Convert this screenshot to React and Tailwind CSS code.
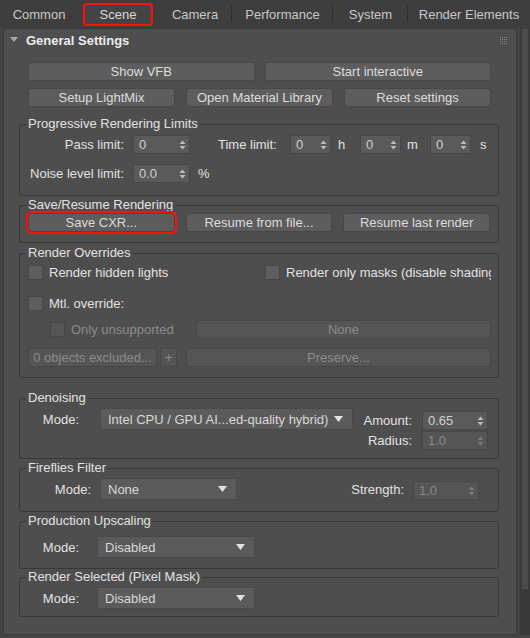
import React from 'react'

const FONT = "font-['Liberation_Sans',Arial,sans-serif]"

function Btn({ children, className = '', disabled = false }) {
  return (
    <div
      className={`h-[19px] flex items-center justify-center rounded-[3px] border border-[#474747] text-[13px] leading-none whitespace-nowrap ${disabled ? 'bg-[#555555] text-[#8c8c8c]' : 'bg-[#5d5d5d] text-[#dcdcdc]'} ${className}`}
    >
      {children}
    </div>
  )
}

function Arrows({ disabled }) {
  const c = disabled ? '#7a7a7a' : '#bdbdbd'
  return (
    <svg width="7" height="12" viewBox="0 0 7 12">
      <polygon points="0.5,5 3.5,1.5 6.5,5" fill={c} />
      <polygon points="0.5,7 3.5,10.5 6.5,7" fill={c} />
    </svg>
  )
}

function Spinner({ value, className = '', disabled = false }) {
  return (
    <div
      className={`h-[19px] flex items-center justify-between pl-[5px] pr-[3px] border border-[#474747] text-[13px] leading-none ${disabled ? 'bg-[#555555] text-[#8a8a8a]' : 'bg-[#5a5a5a] text-[#d0d0d0]'} ${className}`}
    >
      <span>{value}</span>
      <Arrows disabled={disabled} />
    </div>
  )
}

function Dropdown({ value, className = '' }) {
  return (
    <div className={`h-[22px] flex items-center justify-between pl-[7px] pr-[9px] bg-[#5b5b5b] border border-[#4a4a4a] text-[13px] leading-none text-[#d8d8d8] whitespace-nowrap ${className}`}>
      <span>{value}</span>
      <svg width="9" height="6" viewBox="0 0 9 6">
        <polygon points="0,0 9,0 4.5,6" fill="#e2e2e2" />
      </svg>
    </div>
  )
}

function Check({ label, disabled = false, className = '' }) {
  return (
    <div className={`flex items-center gap-[6px] text-[13px] leading-none whitespace-nowrap ${disabled ? 'text-[#8c8c8c]' : 'text-[#e2e2e2]'} ${className}`}>
      <div className={`w-[15px] h-[15px] shrink-0 border border-[#474747] ${disabled ? 'bg-[#555555]' : 'bg-[#5e5e5e]'}`} />
      <span>{label}</span>
    </div>
  )
}

function Group({ title, className = '', children }) {
  return (
    <fieldset className={`ml-[15px] mr-[17px] border border-[#383838] rounded-[3px] pl-[6px] pr-[7px] ${className}`}>
      <legend className="px-[2px] text-[13px] leading-[16px] text-[#e2e2e2]">{title}</legend>
      <div className="pl-[2px]">{children}</div>
    </fieldset>
  )
}

const tabs = [
  { name: 'Common', w: 'w-[78px]' },
  { name: 'Scene', w: 'w-[80px]', active: true },
  { name: 'Camera', w: 'w-[74px]', sep: true },
  { name: 'Performance', w: 'w-[101px]', sep: true },
  { name: 'System', w: 'w-[75px]', sep: true },
  { name: 'Render Elements', w: 'w-[122px]' },
]

export default function App() {
  return (
    <div className={`w-[530px] h-[638px] bg-[#444444] ${FONT} overflow-hidden`}>
      {/* Tabs */}
      <div className="h-[28px] flex bg-[#3e3e3e]">
        {tabs.map(t => (
          <div key={t.name} className={`${t.w} h-full flex items-center relative text-[13px] leading-none text-[#c8c8c8]`}>
            {t.active ? (
              <div className="ml-[5px] w-[70px] h-[23px] flex items-center justify-center border-2 border-[#ff1010] rounded-[4px] bg-[#444444] text-[#d8d8d8]">
                {t.name}
              </div>
            ) : (
              <div className="w-full text-center">{t.name}</div>
            )}
            {t.sep && <div className="absolute right-0 top-[6px] w-px h-[16px] bg-[#2e2e2e]" />}
          </div>
        ))}
      </div>

      <div className="flex pl-[3px]">
        {/* Rollout */}
        <div className="w-[514px] h-[607px] bg-[#4e4e4e] border border-[#3a3a3a] rounded-[3px]">
          <div className="h-[22px] flex items-center pl-[6px] pr-[8px]">
            <svg width="8" height="6" viewBox="0 0 8 6" className="mr-[8px]">
              <polygon points="0,0 8,0 4,5" fill="#a8a8a8" />
            </svg>
            <span className="text-[13px] font-bold leading-none text-[#ececec]">General Settings</span>
            <svg width="9" height="9" viewBox="0 0 9 9" className="ml-auto">
              {[0, 1, 2, 3].map(r =>
                [0, 1, 2, 3].map(c => <rect key={`${r}${c}`} x={c * 2 + 1} y={r * 2 + 1} width="1" height="1" fill="#8a8a8a" />)
              )}
            </svg>
          </div>

          <div className="mt-[11px] pl-[24px] pr-[25px] flex gap-[10px]">
            <Btn className="flex-1">Show VFB</Btn>
            <Btn className="flex-1">Start interactive</Btn>
          </div>
          <div className="mt-[7px] pl-[24px] pr-[25px] flex gap-[11px]">
            <Btn className="flex-1">Setup LightMix</Btn>
            <Btn className="flex-1">Open Material Library</Btn>
            <Btn className="flex-1">Reset settings</Btn>
          </div>

          <Group title="Progressive Rendering Limits" className="mt-[9px] pb-[12px]">
            <div className="pt-[3px] flex items-center h-[22px] text-[13px] leading-none text-[#e2e2e2]">
              <div className="w-[96px] text-right">Pass limit:</div>
              <Spinner value="0" className="ml-[9px] w-[57px]" />
              <div className="ml-[28px] w-[63px]">Time limit:</div>
              <Spinner value="0" className="ml-[9px] w-[41px]" />
              <div className="ml-[7px] w-[22px]">h</div>
              <Spinner value="0" className="ml-0 w-[41px]" />
              <div className="ml-[6px] w-[23px]">m</div>
              <Spinner value="0" className="w-[41px]" />
              <div className="ml-[9px]">s</div>
            </div>
            <div className="mt-[10px] flex items-center h-[19px] text-[13px] leading-none text-[#e2e2e2]">
              <div className="w-[96px] text-right">Noise level limit:</div>
              <Spinner value="0.0" className="ml-[9px] w-[57px]" />
              <div className="ml-[8px]">%</div>
            </div>
          </Group>

          <Group title="Save/Resume Rendering" className="mt-[1px] pb-[10px]">
            <div className="flex gap-[11px] pr-[1px]">
              <Btn className="flex-1 ring-2 ring-[#ff1010] rounded-[4px]">Save CXR...</Btn>
              <Btn className="flex-1">Resume from file...</Btn>
              <Btn className="flex-1">Resume last render</Btn>
            </div>
          </Group>

          <Group title="Render Overrides" className="mt-[2px] pb-[10px]">
            <div className="pt-[4px] flex items-center h-[19px]">
              <Check label="Render hidden lights" className="w-[237px]" />
              <div className="w-[226px] overflow-hidden">
                <Check label="Render only masks (disable shading)" />
              </div>
            </div>
            <div className="mt-[16px] flex items-center h-[15px]">
              <Check label="Mtl. override:" />
            </div>
            <div className="mt-[9px] flex items-center h-[19px]">
              <Check label="Only unsupported" disabled className="ml-[22px] w-[146px]" />
              <Btn disabled className="flex-1">None</Btn>
            </div>
            <div className="mt-[9px] flex items-center h-[19px]">
              <Btn disabled className="w-[129px]">0 objects excluded...</Btn>
              <Btn disabled className="ml-[3px] w-[17px]">+</Btn>
              <Btn disabled className="ml-[9px] flex-1">Preserve...</Btn>
            </div>
          </Group>

          <Group title="Denoising" className="mt-[12px] pb-[8px]">
            <div className="flex items-start text-[13px] leading-none text-[#e2e2e2]">
              <div className="mt-[2px] flex items-center h-[22px]">
                <div className="w-[51px] text-right">Mode:</div>
                <Dropdown value="Intel CPU / GPU AI...ed-quality hybrid)" className="ml-[21px] w-[253px]" />
              </div>
              <div className="mt-[5px] flex flex-col gap-[1px]">
                <div className="flex items-center h-[19px]">
                  <div className="w-[59px] text-right">Amount:</div>
                  <Spinner value="0.65" className="ml-[10px] w-[66px]" />
                </div>
                <div className="flex items-center h-[19px]">
                  <div className="w-[59px] text-right">Radius:</div>
                  <Spinner value="1.0" disabled className="ml-[10px] w-[66px]" />
                </div>
              </div>
            </div>
          </Group>

          <Group title="Fireflies Filter" className="mt-[1px] pb-[11px]">
            <div className="mt-[2px] flex items-center h-[22px] text-[13px] leading-none text-[#e2e2e2]">
              <div className="w-[63px] text-right">Mode:</div>
              <Dropdown value="None" className="ml-[9px] w-[137px]" />
              <div className="ml-[114px] w-[53px] text-right">Strength:</div>
              <Spinner value="1.0" disabled className="ml-[9px] w-[66px] mt-[3px]" />
            </div>
          </Group>

          <Group title="Production Upscaling" className="mt-[1px] pb-[10px]">
            <div className="mt-[7px] flex items-center h-[22px] text-[13px] leading-none text-[#e2e2e2]">
              <div className="w-[51px] text-right">Mode:</div>
              <Dropdown value="Disabled" className="ml-[18px] w-[158px]" />
            </div>
          </Group>

          <Group title="Render Selected (Pixel Mask)" className="mt-0 pb-[7px]">
            <div className="mt-[2px] flex items-center h-[22px] text-[13px] leading-none text-[#e2e2e2]">
              <div className="w-[51px] text-right">Mode:</div>
              <Dropdown value="Disabled" className="ml-[18px] w-[158px]" />
            </div>
          </Group>
        </div>

        {/* Scrollbar */}
        <div className="ml-[3px] w-[10px] h-[607px] bg-[#393939] flex flex-col">
          <div className="h-[562px] mx-[1px] bg-[#4c4c4c] border border-[#3e3e3e] rounded-[2px]" />
        </div>
      </div>
    </div>
  )
}
